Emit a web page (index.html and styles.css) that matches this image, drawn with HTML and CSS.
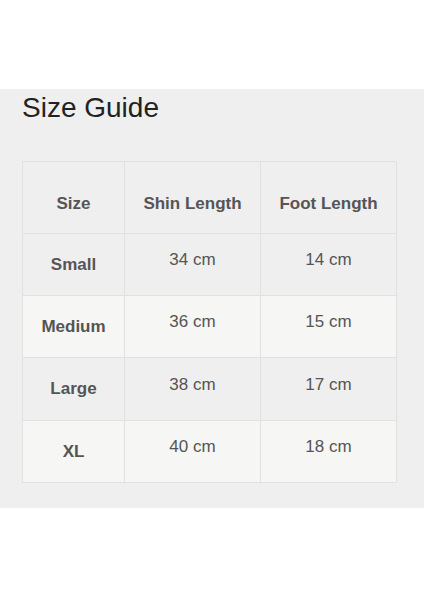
FILE: index.html
```html
<!DOCTYPE html>
<html lang="en">
<head>
<meta charset="utf-8">
<title>Size Guide</title>
<link rel="stylesheet" href="styles.css">
</head>
<body>
<section class="panel">
  <h1 class="title">Size Guide</h1>
  <table class="guide">
    <colgroup>
      <col class="c1"><col class="c2"><col class="c3">
    </colgroup>
    <thead>
      <tr class="head"><th>Size</th><th>Shin Length</th><th>Foot Length</th></tr>
    </thead>
    <tbody>
      <tr class="odd"><th>Small</th><td>34 cm</td><td>14 cm</td></tr>
      <tr class="even"><th>Medium</th><td>36 cm</td><td>15 cm</td></tr>
      <tr class="odd tall"><th>Large</th><td>38 cm</td><td>17 cm</td></tr>
      <tr class="even"><th>XL</th><td>40 cm</td><td>18 cm</td></tr>
    </tbody>
  </table>
</section>
</body>
</html>
```
FILE: styles.css
```css
html, body {
  margin: 0;
  padding: 0;
  background: #ffffff;
  font-family: "Liberation Sans", Arial, sans-serif;
}
.panel {
  margin-top: 89px;
  background: #efefef;
  padding: 3px 22px 25px 22px;
}
.title {
  margin: 0;
  font-size: 28px;
  line-height: 32px;
  font-weight: normal;
  color: #222222;
}
.guide {
  margin-top: 37px;
  border-collapse: collapse;
  table-layout: fixed;
  width: 374px;
  border: 1px solid #e1e1e1;
}
.c1 { width: 102px; }
.c2 { width: 136px; }
.c3 { width: 136px; }
.guide th, .guide td {
  border: 1px solid #e1e1e1;
  text-align: center;
  font-size: 17px;
  color: #555555;
  padding: 0;
}
.guide th { font-weight: bold; vertical-align: middle; }
.guide td { font-weight: normal; vertical-align: middle; padding-bottom: 9px; }
.head { height: 72px; }
.head th { background: #efefef; padding-top: 12px; }
.odd, .even { height: 62px; }
.tall { height: 63px; }
.odd th, .odd td { background: #efefef; }
.even th, .even td { background: #f6f6f4; }
```
